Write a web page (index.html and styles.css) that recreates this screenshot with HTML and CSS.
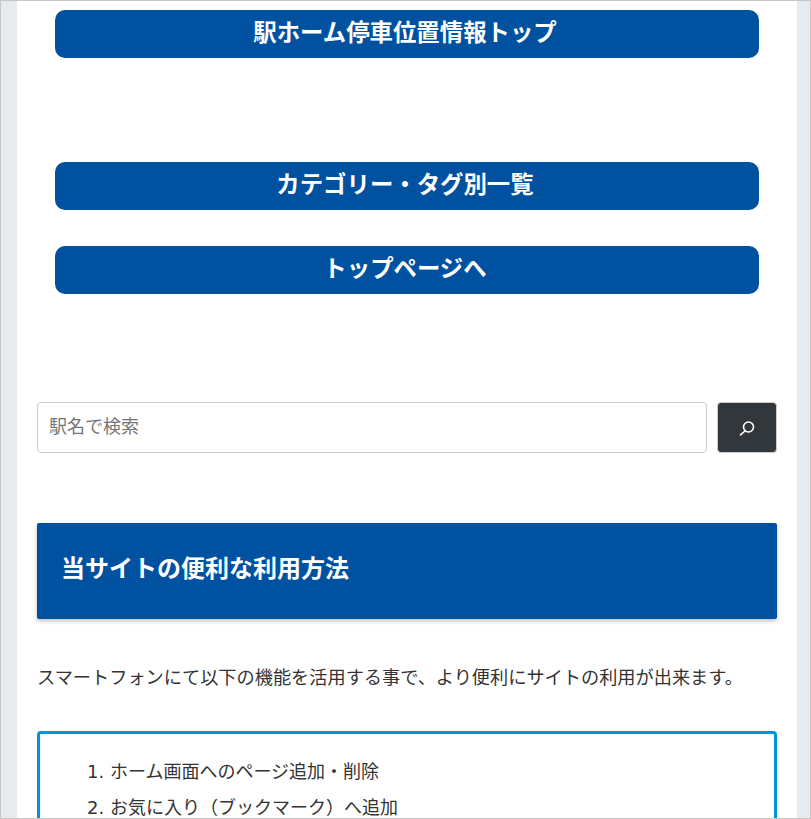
FILE: index.html
```html
<!DOCTYPE html>
<html lang="ja">
<head>
  <meta charset="UTF-8" />
  <meta name="viewport" content="width=device-width, initial-scale=1.0" />
  <title>駅ホーム停車位置情報</title>
  <link rel="stylesheet" href="styles.css">
</head>
<body>
  <div class="page">
    <a class="nav-btn first" href="#">駅ホーム停車位置情報トップ</a>
    <a class="nav-btn second" href="#">カテゴリー・タグ別一覧</a>
    <a class="nav-btn third" href="#">トップページへ</a>

    <form class="search">
      <input class="search-input" type="text" placeholder="駅名で検索" />
      <button class="search-btn" type="button" aria-label="検索">
        <svg width="18" height="18" viewBox="0 0 18 18" fill="none" stroke="#fff" stroke-width="1.6">
          <circle cx="10.5" cy="8" r="5" />
          <path d="M7 12 L2.5 15.8" stroke-linecap="round" />
        </svg>
      </button>
    </form>

    <h2 class="heading">当サイトの便利な利用方法</h2>
    <p class="lead">スマートフォンにて以下の機能を活用する事で、より便利にサイトの利用が出来ます。</p>

    <div class="toc">
      <ol>
        <li>ホーム画面へのページ追加・削除</li>
        <li>お気に入り（ブックマーク）へ追加</li>
      </ol>
    </div>
  </div>
</body>
</html>
```

FILE: styles.css
```css
html, body { margin: 0; height: 100%; overflow: hidden; }
body { box-sizing: border-box; background: #e6ebef; border: 1px solid #c6c6c6; color: #333; font-family: "Noto Sans CJK JP", "Noto Sans", sans-serif; font-size: 18px; }
.page { box-sizing: border-box; display: flex; flex-direction: column; width: 780px; height: 100%; margin-left: 16px; padding: 9px 20px 0; background: #fff; }
.nav-btn { display: block; flex: none; height: 48px; margin: 0 18px; padding-right: 4px; background: #00519f; border-radius: 10px; color: #fff; font-size: 23.4px; font-weight: bold; line-height: 43px; text-align: center; text-decoration: none; }
.second { margin-top: 104px; }
.third { margin-top: 36px; }
.search { display: flex; flex: none; gap: 10px; margin-top: 108px; }
.search-input { flex: 1; box-sizing: border-box; height: 51px; padding: 0 11px 6px; border: 1px solid #ccc; border-radius: 4px; font-family: inherit; font-size: 18px; }
.search-input::placeholder { color: #757575; }
.search-btn { display: flex; align-items: center; justify-content: center; width: 60px; height: 51px; padding: 0; background: #32373c; border: 1px solid #ccc; border-radius: 4px; }
.heading { box-sizing: border-box; flex: none; height: 96px; margin: 70px 0 0; padding: 0 24px; background: #00519f; border-radius: 2px; box-shadow: 0 2px 4px rgba(0,0,0,0.25); color: #fff; font-size: 24px; line-height: 88px; }
.lead { flex: none; margin: 39px 0 0; font-size: 18.2px; line-height: 36px; }
.toc { flex: 1; margin-top: 37px; padding: 20px 20px 0 0; border: 3px solid #0095d9; border-bottom: none; border-radius: 4px 4px 0 0; }
.toc ol { margin: 0; padding-left: 70px; font-family: "DejaVu Sans", "Noto Sans CJK JP", sans-serif; font-size: 18px; }
.toc li { line-height: 36px; }
```
